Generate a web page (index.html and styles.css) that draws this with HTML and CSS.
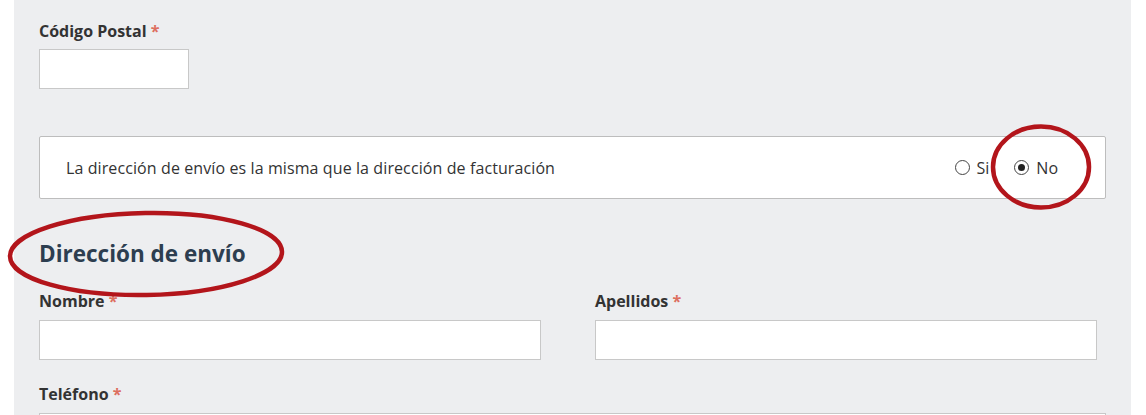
FILE: index.html
```html
<!DOCTYPE html>
<html lang="es">
<head>
<meta charset="utf-8">
<title>Dirección de envío</title>
<link rel="stylesheet" href="styles.css">
</head>
<body>
<div class="page">
  <main class="panel">
    <div class="field field-short">
      <label class="label">Código Postal <span class="req">*</span></label>
      <div class="input"></div>
    </div>

    <div class="same-box">
      <span class="same-text">La dirección de envío es la misma que la dirección de facturación</span>
      <div class="radios">
        <span class="radio-opt"><span class="radio"></span>Si</span>
        <span class="radio-opt"><span class="radio checked"></span>No</span>
      </div>
      <svg class="mark mark-no" width="104" height="90" viewBox="0 0 104 90"><ellipse cx="52" cy="45" rx="48" ry="40.5" fill="none" stroke="#b3151b" stroke-width="4.5"/></svg>
    </div>

    <div class="heading-wrap">
      <h2 class="heading">Dirección de envío</h2>
      <svg class="mark mark-head" width="284" height="92" viewBox="0 0 284 92"><ellipse cx="140" cy="46" rx="136" ry="41" fill="none" stroke="#b3151b" stroke-width="4.5" transform="rotate(-1 140 46)"/></svg>
    </div>

    <div class="row2">
      <div class="field">
        <label class="label">Nombre <span class="req">*</span></label>
        <div class="input"></div>
      </div>
      <div class="field">
        <label class="label">Apellidos <span class="req">*</span></label>
        <div class="input"></div>
      </div>
    </div>

    <div class="field field-tel">
      <label class="label">Teléfono <span class="req">*</span></label>
      <div class="input"></div>
    </div>
  </main>
</div>
</body>
</html>
```
FILE: styles.css
```css
html, body {
  margin: 0;
  padding: 0;
  background: #ffffff;
  height: 100%;
  overflow: hidden;
}

body {
  font-family: "Open Sans", "Liberation Sans", sans-serif;
  color: #333333;
}

.page {
  display: flex;
  padding: 0 15px 0 14px;
  height: 415px;
  overflow: hidden;
}

.panel {
  flex: 1;
  background: #edeef0;
  padding: 21px 25px 0 25px;
  display: flex;
  flex-direction: column;
}

.panel > * {
  flex-shrink: 0;
}

.field {
  display: flex;
  flex-direction: column;
}

.label {
  font-size: 16px;
  font-weight: 700;
  line-height: 20px;
  color: #333333;
  margin-bottom: 8px;
}

.req {
  color: #dd6f5f;
}

.input {
  height: 38px;
  background: #ffffff;
  border: 1px solid #c8c8c8;
  flex-shrink: 0;
}

.field-short .input {
  width: 148px;
}

.same-box {
  position: relative;
  margin-top: 47px;
  height: 61px;
  background: #ffffff;
  border: 1px solid #bdbdbd;
  border-radius: 2px;
  display: flex;
  align-items: center;
  justify-content: space-between;
  padding: 0 47px 0 26px;
}

.same-text {
  font-size: 16px;
  line-height: 20px;
  letter-spacing: 0.1px;
  color: #333333;
}

.radios {
  display: flex;
  gap: 25px;
  font-size: 16px;
  line-height: 20px;
  color: #333333;
}

.radio-opt {
  display: flex;
  align-items: center;
  gap: 7px;
}

.radio {
  border: 1px solid #444;
  border-radius: 50%;
  background: #fff;
  position: relative;
  box-sizing: border-box;
  width: 15px;
  height: 15px;
}

.radio.checked::after {
  content: "";
  position: absolute;
  left: 3px;
  top: 3px;
  width: 7px;
  height: 7px;
  border-radius: 50%;
  background: #222;
}

.mark {
  position: absolute;
  pointer-events: none;
}

.mark-no {
  left: 949px;
  top: -15px;
}

.heading-wrap {
  position: relative;
  margin-top: 40px;
}

.heading {
  margin: 0;
  font-size: 22.5px;
  font-weight: 700;
  line-height: 30px;
  color: #2d3e50;
}

.mark-head {
  left: -33px;
  top: -31px;
}

.row2 {
  margin-top: 22px;
  margin-right: 8px;
  display: grid;
  grid-template-columns: 502px 502px;
  column-gap: 54px;
}

.row2 .label,
.field-tel .label {
  margin-bottom: 9px;
}

.field-tel {
  margin-top: 24px;
}
```
